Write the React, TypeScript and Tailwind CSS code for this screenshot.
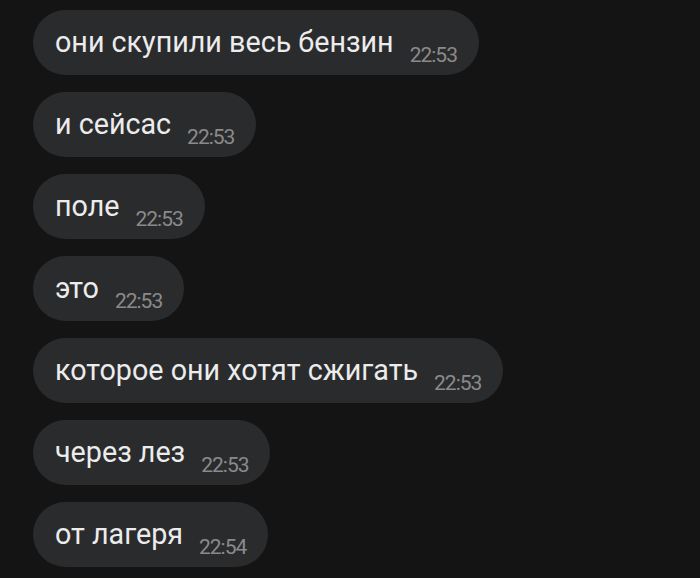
import React from "react";

const messages = [
  { text: "они скупили весь бензин", time: "22:53" },
  { text: "и сейсас", time: "22:53" },
  { text: "поле", time: "22:53" },
  { text: "это", time: "22:53" },
  { text: "которое они хотят сжигать", time: "22:53" },
  { text: "через лез", time: "22:53" },
  { text: "от лагеря", time: "22:54" },
];

export default function App() {
  return (
    <div
      className="w-[700px] h-[578px] bg-[#141414] overflow-hidden pt-[10px] pl-[33px] flex flex-col items-start gap-[17px]"
      style={{ fontFamily: "Roboto, 'Noto Sans', sans-serif" }}
    >
      {messages.map((m, i) => (
        <div
          key={i}
          className="h-[65px] rounded-full bg-[#2a2b2d] flex items-end pl-[22px] pr-[22px]"
        >
          <span className="text-[28.7px] leading-none text-[#ececec] mb-[18px] whitespace-nowrap">
            {m.text}
          </span>
          <span className="text-[21px] tracking-[-1px] leading-none text-[#8a8a8a] ml-[16px] mb-[9px] whitespace-nowrap">
            {m.time}
          </span>
        </div>
      ))}
    </div>
  );
}
